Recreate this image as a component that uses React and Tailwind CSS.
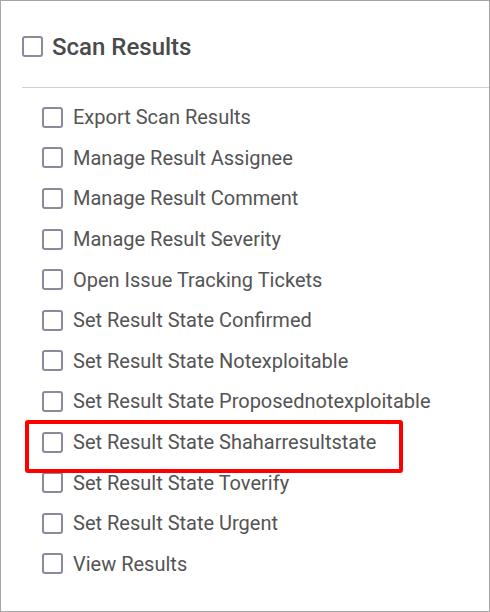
import React from "react";

const items = [
  "Export Scan Results",
  "Manage Result Assignee",
  "Manage Result Comment",
  "Manage Result Severity",
  "Open Issue Tracking Tickets",
  "Set Result State Confirmed",
  "Set Result State Notexploitable",
  "Set Result State Proposednotexploitable",
  "Set Result State Shaharresultstate",
  "Set Result State Toverify",
  "Set Result State Urgent",
  "View Results",
];

function Box() {
  return <span className="block w-[21px] h-[21px] shrink-0 border-2 border-[#8d889c] rounded-[3px] bg-white" />;
}

export default function App() {
  return (
    <div
      className="relative w-[490px] h-[612px] bg-white border border-[#a6a6a6] overflow-hidden"
      style={{ fontFamily: "Roboto, 'Liberation Sans', sans-serif" }}
    >
      <div className="pl-[21px]">
        {/* Group header */}
        <div className="flex items-center h-[21px] mt-[35px]">
          <Box />
          <span className="ml-[9px] text-[24px] font-medium text-[#4a4a4a] leading-none">Scan Results</span>
        </div>
        <div className="mt-[30px] border-t border-[#cfcfd4]" />

        {/* Permission list */}
        <ul className="mt-[9px] pl-[20px]">
          {items.map((label) => (
            <li key={label} className="flex items-center h-[40.6px]">
              <Box />
              <span className="ml-[10px] text-[20px] text-[#545454] leading-none">{label}</span>
            </li>
          ))}
        </ul>
      </div>

      {/* highlight annotation */}
      <div className="absolute left-[24px] top-[419px] w-[378px] h-[53px] border-4 border-[#ff0000] rounded-[3px] pointer-events-none" />
    </div>
  );
}
